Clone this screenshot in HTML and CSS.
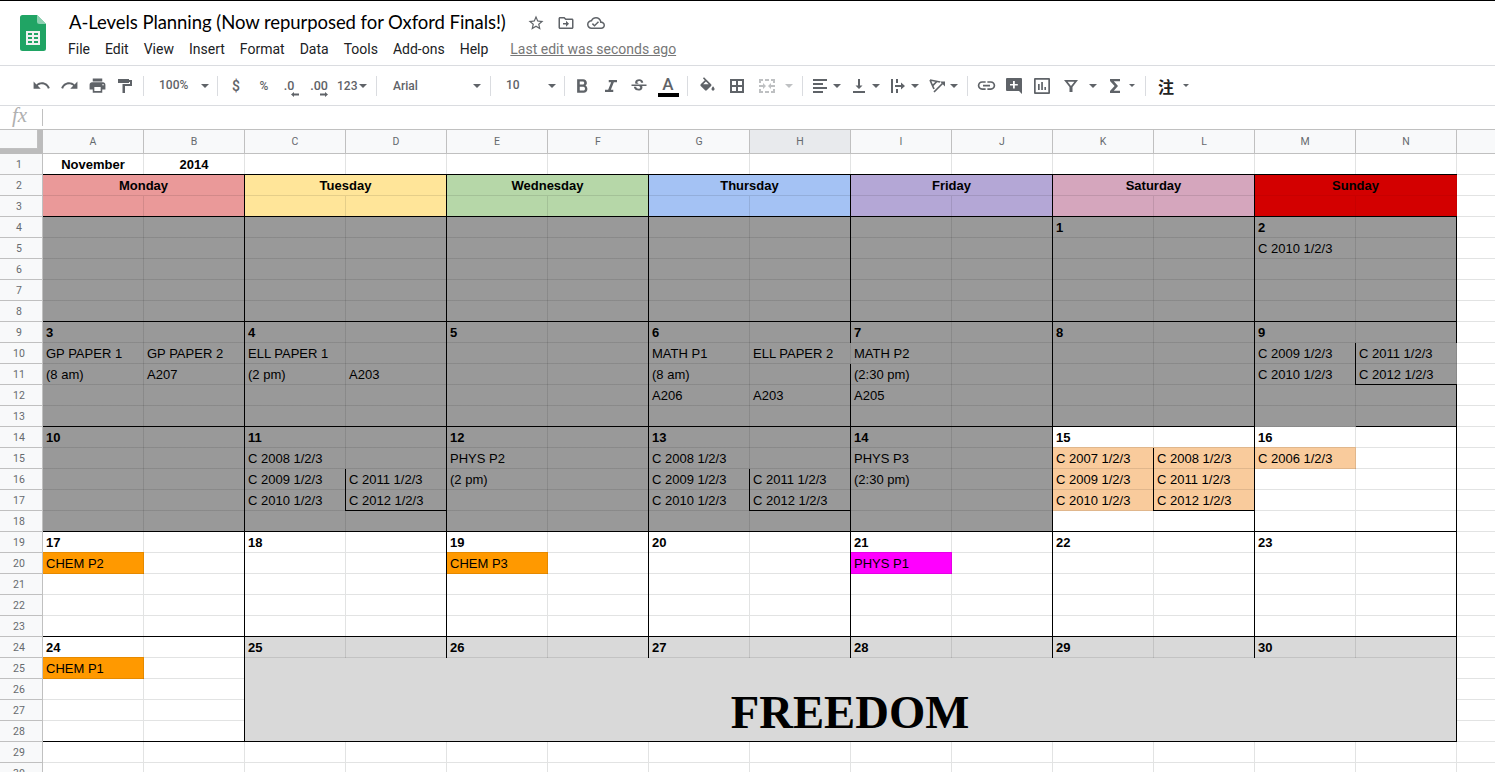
FILE: index.html
```html
<!DOCTYPE html>
<html lang="en">
<head>
<meta charset="utf-8">
<title>A-Levels Planning</title>
<link rel="stylesheet" href="styles.css">
</head>
<body>
<header class="top">
  <svg class="logo" viewBox="0 0 26 36">
    <path d="M2.500 0H17l9 9v24.500a2.500 2.500 0 0 1-2.500 2.500h-21A2.500 2.500 0 0 1 0 33.500v-31A2.500 2.500 0 0 1 2.500 0z" fill="#20a464"/>
    <path d="M17 0l9 9h-6.500A2.500 2.500 0 0 1 17 6.500z" fill="#8ed1b1"/>
    <path d="M6 16h14v14H6zM8 18v2h4v-2zM14 18v2h4v-2zM8 22v2h4v-2zM14 22v2h4v-2zM8 26v2h4v-2zM14 26v2h4v-2z" fill="#f1f1f1" fill-rule="evenodd"/>
  </svg>
  <div class="heading">
    <div class="title-row">
      <h1 class="title">A-Levels Planning (Now repurposed for Oxford Finals!)</h1>
      <svg class="icon i18" viewBox="0 0 24 24"><path d="M22 9.240l-7.190-.62L12 2 9.190 8.630 2 9.240l5.460 4.730L5.820 21 12 17.270 18.180 21l-1.630-7.030L22 9.240zM12 15.400l-3.760 2.270 1-4.280-3.320-2.880 4.380-.38L12 6.100l1.710 4.040 4.380.38-3.320 2.880 1 4.280L12 15.400z"/></svg>
      <svg class="icon i18" viewBox="0 0 24 24"><path d="M20 6h-8l-2-2H4c-1.100 0-2 .9-2 2v12c0 1.100.9 2 2 2h16c1.100 0 2-.9 2-2V8c0-1.100-.9-2-2-2zm0 12H4V6h5.200l2 2H20v10zm-8-1l4-4-4-4v3H8v2h4z"/></svg>
      <svg class="icon i18" viewBox="0 0 24 24"><path d="M19.350 10.040C18.670 6.590 15.640 4 12 4 9.110 4 6.600 5.640 5.350 8.040 2.340 8.360 0 10.910 0 14c0 3.310 2.690 6 6 6h13c2.760 0 5-2.240 5-5 0-2.640-2.050-4.780-4.650-4.960zM19 18H6c-2.210 0-4-1.790-4-4s1.790-4 4-4h.71C7.370 7.690 9.480 6 12 6c3.040 0 5.500 2.460 5.500 5.500v.5H19c1.660 0 3 1.340 3 3s-1.340 3-3 3zm-9-3.820l-2.090-2.090L6.500 13.500 10 17l6.010-6.010-1.410-1.410z"/></svg>
    </div>
    <nav class="menu">
      <span>File</span><span>Edit</span><span>View</span><span>Insert</span><span>Format</span><span>Data</span><span>Tools</span><span>Add-ons</span><span>Help</span>
      <span class="last-edit">Last edit was seconds ago</span>
    </nav>
  </div>
</header>

<div class="toolbar">
  <span class="btn"><svg class="icon i19" viewBox="0 0 24 24"><path d="M12.500 8c-2.650 0-5.050.99-6.900 2.600L2 7v9h9l-3.620-3.620c1.390-1.160 3.160-1.880 5.120-1.880 3.540 0 6.550 2.310 7.600 5.500l2.370-.78C21.080 11.030 17.150 8 12.500 8z"/></svg></span>
  <span class="btn"><svg class="icon i19" viewBox="0 0 24 24"><path d="M18.400 10.600C16.550 8.990 14.150 8 11.500 8c-4.650 0-8.580 3.030-9.960 7.220L3.900 16c1.050-3.190 4.050-5.500 7.600-5.500 1.950 0 3.730.72 5.120 1.880L13 16h9V7l-3.600 3.600z"/></svg></span>
  <span class="btn"><svg class="icon i19" viewBox="0 0 24 24"><path d="M19 8H5c-1.660 0-3 1.340-3 3v6h4v4h12v-4h4v-6c0-1.660-1.340-3-3-3zm-3 11H8v-5h8v5zm3-7c-.55 0-1-.45-1-1s.45-1 1-1 1 .45 1 1-.45 1-1 1zm-1-9H6v4h12V3z"/></svg></span>
  <span class="btn"><svg class="icon i14" viewBox="0 0 14 14"><path d="M0 0h11v1h3v6H7v7H4.500V5H12V3h-1v1H0z"/></svg></span>
  <i class="sep"></i>
  <span class="field zoom">100%</span><i class="caret"></i>
  <i class="sep"></i>
  <span class="btn glyph g1">$</span>
  <span class="btn glyph percent">%</span>
  <span class="btn glyph decimal less"><span>.0</span><svg class="arrow" viewBox="0 0 8 5"><path d="M3 0v1.500h5v2H3V5L0 2.500z"/></svg></span>
  <span class="btn glyph decimal"><span>.00</span><svg class="arrow" viewBox="0 0 8 5"><path d="M5 0v1.500H0v2h5V5l3-2.500z"/></svg></span>
  <span class="field number">123</span><i class="caret tight"></i>
  <i class="sep g3"></i>
  <span class="field font">Arial</span><i class="caret"></i>
  <i class="sep g1"></i>
  <span class="field size">10</span><i class="caret"></i>
  <i class="sep"></i>
  <span class="btn"><svg class="icon i18" viewBox="0 0 24 24"><path d="M16.600 11.300c1.100-.8 1.900-2 1.900-3.400C18.500 5 16.300 3 13.500 3H5.500v18h8.800c2.800 0 4.900-2.200 4.900-5 0-2.100-1-3.900-2.600-4.700zM9 6h4c1.200 0 2 .9 2 2s-.8 2-2 2H9zm4.800 12H9v-5h4.800c1.300 0 2.200 1.200 2.200 2.500S15.100 18 13.800 18z"/></svg></span>
  <span class="btn g1"><svg class="icon i18" viewBox="0 0 24 24"><path d="M9 4v3h3.200l-4 10H4v3h11v-3h-3.200l4-10H20V4z"/></svg></span>
  <span class="btn"><svg class="icon i18" viewBox="0 0 24 24"><path d="M6.850 7.080C6.850 4.370 9.450 3 12.240 3c1.640 0 3 .49 3.900 1.280.77.65 1.460 1.730 1.460 3.240h-3.010c0-.31-.05-.59-.15-.85-.29-.86-1.200-1.280-2.250-1.280-1.860 0-2.340 1.020-2.340 1.700 0 .48.25.88.74 1.210.38.250.77.480 1.410.7H7.390c-.21-.34-.54-.89-.54-1.920zM22 12v-2H2v2h9.620c1.150.45 1.960.75 1.960 1.970 0 1-.81 1.670-2.280 1.670-1.540 0-2.930-.54-2.930-2.510H5.300c0 .55.08 1.130.24 1.580.81 2.290 3.290 3.300 5.760 3.300 2.270 0 5.300-.89 5.300-4.050 0-.3-.01-1.160-.48-1.940H22z"/></svg></span>
  <span class="btn text-color g1"><span>A</span></span>
  <i class="sep g1"></i>
  <span class="btn g2"><svg class="icon i19" viewBox="0 0 24 24"><path d="M16.560 8.940L7.620 0 6.210 1.410l2.380 2.380-5.150 5.150c-.59.59-.59 1.540 0 2.120l5.500 5.500c.29.290.68.440 1.060.440s.77-.15 1.060-.44l5.500-5.500c.59-.58.59-1.530 0-2.120zM19 11.500s-2 2.170-2 3.500c0 1.100.9 2 2 2s2-.9 2-2c0-1.330-2-3.500-2-3.500zM6.500 9L10 5.500 13.500 9z" fill-rule="evenodd" transform="translate(0 1.500)"/></svg></span>
  <span class="btn g2"><svg class="icon i14" viewBox="0 0 14 14"><path d="M0 0h14v14H0zM2 2v4h4V2zM8 2v4h4V2zM2 8v4h4V8zM8 8v4h4V8z" fill-rule="evenodd"/></svg></span>
  <span class="btn g2 off"><svg class="icon merge" viewBox="0 0 16 14"><path d="M0 0h4v2H2v2H0zM6 0h4v2H6zM12 0h4v4h-2V2h-2zM0 10h2v2h2v2H0zM6 12h4v2H6zM14 10h2v4h-4v-2h2zM0 6h4V4l3 3-3 3V8H0zM16 6h-4V4L9 7l3 3V8h4z"/></svg></span><i class="caret off"></i>
  <i class="sep g1"></i>
  <span class="btn slim g5"><svg class="icon i14" viewBox="0 0 14 14"><path d="M0 0h14v2H0zM0 4h10v2H0zM0 8h14v2H0zM0 12h10v2H0z"/></svg></span><i class="caret"></i>
  <span class="btn slim g5"><svg class="icon i14" viewBox="0 0 14 14"><path d="M6 0h2v6.500h2.500L7 10 3.500 6.500H6zM1 12h12v2H1z"/></svg></span><i class="caret"></i>
  <span class="btn slim g5"><svg class="icon i14" viewBox="0 0 14 14"><path d="M0 0h2v14H0zM5 0h2v4H5zM5 10h2v4H5zM4 6h6V3.500L14 7l-4 3.500V8H4z"/></svg></span><i class="caret"></i>
  <span class="btn slim g5"><svg class="icon rotate" viewBox="0 0 16 14"><path d="M1 1l10 2M1 1l4 9M7.800 2.500L3.700 6.600M5 13l8.500-8.500" fill="none" stroke="#5f6368" stroke-width="1.700"/><path d="M11 2.500h5V7.500z"/></svg></span><i class="caret"></i>
  <i class="sep g1"></i>
  <span class="btn g1"><svg class="icon i21" viewBox="0 0 24 24"><path d="M3.900 12c0-1.710 1.390-3.100 3.100-3.100h4V7H7c-2.760 0-5 2.240-5 5s2.240 5 5 5h4v-1.900H7c-1.710 0-3.100-1.390-3.100-3.100zM8 13h8v-2H8v2zm9-6h-4v1.900h4c1.710 0 3.100 1.390 3.100 3.100s-1.390 3.100-3.100 3.100h-4V17h4c2.760 0 5-2.240 5-5s-2.240-5-5-5z"/></svg></span>
  <span class="btn"><svg class="icon i16" viewBox="0 0 16 16"><path d="M1 0h14a1 1 0 0 1 1 1v15l-3-3H1a1 1 0 0 1-1-1V1a1 1 0 0 1 1-1zM7 3v3H4v1.500h3v3h1.800v-3h3V6h-3V3z" fill-rule="evenodd"/></svg></span>
  <span class="btn"><svg class="icon i16" viewBox="0 0 16 16"><path d="M1 0h14a1 1 0 0 1 1 1v14a1 1 0 0 1-1 1H1a1 1 0 0 1-1-1V1a1 1 0 0 1 1-1zM1.700 1.700v12.600h12.600V1.700zM4 6h1.700v6H4zM7.200 4h1.700v8H7.200zM10.400 9H12v3h-1.600z" fill-rule="evenodd"/></svg></span>
  <span class="btn g1"><svg class="icon i14" viewBox="0 0 14 14"><path d="M0 1h14L8.500 8v5h-3V8zM3.600 2.700L7 7l3.400-4.300z" fill-rule="evenodd"/></svg></span><i class="caret"></i>
  <span class="btn slim g5"><svg class="icon i14" viewBox="0 0 14 14"><path d="M2 0h10v2.300H5.800L10 7l-4.200 4.700H12V14H2v-2l4.600-5L2 2z"/></svg></span><i class="caret small"></i>
  <i class="sep g1"></i>
  <span class="btn slim ime">注</span><i class="caret small g3"></i>
</div>

<div class="formula"><span class="fx">fx</span></div>
<main class="sheet" id="sheet"></main>
<script src="sheet.js"></script>
</body>
</html>
```

FILE: styles.css
```css
* { box-sizing: border-box; }
body {
  margin: 0;
  height: 772px;
  overflow: hidden;
  background: #fff;
  border-top: 1px solid #000;
  font-family: Roboto, sans-serif;
}
.icon { fill: #5f6368; display: block; flex: none; overflow: visible; }
.i14 { width: 14px; height: 14px; }
.i16 { width: 16px; height: 16px; }
.i18 { width: 18px; height: 18px; }
.i19 { width: 19px; height: 19px; }
.i21 { width: 21px; height: 21px; }
.rotate, .merge { width: 16px; height: 14px; }

.top {
  display: flex;
  height: 65px;
  padding-left: 20px;
  border-bottom: 1px solid #dadce0;
}
.logo { width: 26px; height: 36px; margin-top: 14px; flex: none; }
.heading { margin-left: 22px; }
.title-row { display: flex; align-items: center; height: 28px; margin-top: 8px; gap: 12px; }
.title {
  width: 446px;
  margin: 0 0 2px 1px;
  font: 400 18.500px/26px Lato, sans-serif;
  letter-spacing: -.06px;
  color: #000;
  white-space: nowrap;
}
.menu {
  display: flex;
  gap: 15px;
  font-size: 14px;
  line-height: 24px;
  color: #202124;
  white-space: nowrap;
}
.last-edit { margin-left: 7px; color: #777; text-decoration: underline; }

.toolbar {
  display: flex;
  align-items: center;
  height: 40px;
  padding-left: 27px;
  border-bottom: 1px solid #dadce0;
  font-size: 12px;
  color: #5f6368;
}
.btn { width: 28px; height: 28px; display: flex; align-items: center; justify-content: center; flex: none; }
.slim { width: 18px; }
.glyph { font-size: 14px; font-weight: 500; }
.percent { font-size: 12px; }
.decimal { font-size: 12.500px; flex-direction: column; padding-top: 5px; }
.decimal span { line-height: 13px; padding-right: 2px; }
.less span { padding-right: 6px; }
.arrow { width: 8px; height: 5px; fill: #5f6368; align-self: flex-end; margin-right: 6px; }
.less .arrow { margin-right: 7px; }
.sep { width: 8px; height: 20px; flex: none; background: linear-gradient(#dadce0, #dadce0) 4px 0 / 1px 100% no-repeat; }
.field { flex: none; font-size: 12px; font-weight: 500; }
.zoom { width: 50px; padding: 0 0 1px 12px; }
.number { width: 23px; padding-left: 3px; }
.font { width: 89px; padding-left: 13px; }
.size { width: 50px; padding: 0 0 1px 12px; }
.caret { width: 16px; height: 4px; flex: none; display: flex; justify-content: center; margin-top: 1px; }
.caret::before { content: ""; border: 4px solid transparent; border-top-color: #5f6368; border-bottom: 0; }
.caret.tight { width: 12px; }
.caret.small::before { border-width: 3px 3px 0; }
.off { opacity: .4; }
.g1 { margin-left: 1px; }
.g2 { margin-left: 2px; }
.g3 { margin-left: 3px; }
.g5 { margin-left: 5px; }
.text-color { flex-direction: column; font-size: 17px; font-weight: 500; }
.text-color span { line-height: 18px; }
.text-color::after { content: ""; width: 21px; height: 4px; background: #000; }
.ime { margin-left: 8px; color: #222; font: 700 16px "Noto Sans CJK SC", sans-serif; }

.formula { display: flex; height: 24px; border-bottom: 1px solid #c0c0c0; }
.fx {
  width: 43px;
  height: 17px;
  margin-top: 3px;
  padding-left: 12px;
  border-right: 1px solid #c0c0c0;
  font: italic 21px/12px "Liberation Serif", serif;
  color: #b0b0b0;
}

.sheet {
  display: grid;
  grid-template-columns: 43px repeat(14, 101px) 38px;
  grid-template-rows: 24px repeat(30, 21px);
  font: 13px/20px "Liberation Sans", Arial, sans-serif;
  color: #000;
}
.cell, .head {
  --line: #e2e3e3;
  --r: var(--line);
  --b: var(--line);
  --fill: #fff;
  --right-edge: linear-gradient(var(--r), var(--r)) right / 1px 100% no-repeat;
  --bottom-edge: linear-gradient(var(--b), var(--b)) bottom / 100% 1px no-repeat;
  min-width: 0;
  overflow: hidden;
  white-space: nowrap;
  background: var(--bottom-edge), var(--right-edge), var(--fill);
}
.cell { padding: 1px 0 0 3px; }
.head {
  --line: #c0c0c0;
  --fill: #f8f9fa;
  font-family: Roboto, sans-serif;
  font-size: 10.500px;
  text-align: center;
  color: #666a6e;
}
.col { line-height: 23px; padding-right: 1px; }
.row { padding-right: 5px; line-height: 21px; }
.hot { --fill: #e8eaed; }
.corner { border: solid #bcbcbc; border-width: 0 5px 5px 0; }
.last { --r: transparent; }
.strong { font-weight: 700; }
.center { text-align: center; padding-left: 0; padding-right: 1px; }
.wide { grid-column: span 2; }

.red, .rose, .yellow, .green, .blue, .violet, .pink, .gray, .silver, .peach, .orange, .magenta { --line: rgba(0, 0, 0, .1); }
.rose { --fill: #ea9999; }
.yellow { --fill: #ffe599; }
.green { --fill: #b6d7a8; }
.blue { --fill: #a4c2f4; }
.violet { --fill: #b4a7d6; }
.pink { --fill: #d5a6bd; }
.red { --fill: #d30000; --line: rgba(0, 0, 0, .05); }
.gray { --fill: #999; }
.silver { --fill: #d9d9d9; }
.peach { --fill: #f9cb9c; }
.orange { --fill: #ff9900; }
.magenta { --fill: #ff00ff; }

.b-peach { --b: #e0b78c; }
.b-orange { --b: #e68a00; }
.b-magenta { --b: #e600e6; }
.b-black { --b: #000; }
.r-black { --r: #000; background: var(--right-edge), var(--bottom-edge), var(--fill); }

.freedom {
  grid-column: span 12;
  grid-row: span 4;
  display: flex;
  align-items: flex-end;
  justify-content: center;
  padding: 0 2px 3px 0;
  font: 700 46.700px/54px "Liberation Serif", serif;
}
```

FILE: sheet.js
```js
const COLS = 'ABCDEFGHIJKLMN';
const DAYS = [
  ['Monday', 'rose'], ['Tuesday', 'yellow'], ['Wednesday', 'green'], ['Thursday', 'blue'],
  ['Friday', 'violet'], ['Saturday', 'pink'], ['Sunday', 'red'],
];

const TEXT = {
  A1: 'November', B1: '2014',
  K4: '1', M4: '2', M5: 'C 2010 1/2/3',
  A10: 'GP PAPER 1', A11: '(8 am)', B10: 'GP PAPER 2', B11: 'A207',
  C10: 'ELL PAPER 1', C11: '(2 pm)', D11: 'A203',
  G10: 'MATH P1', G11: '(8 am)', G12: 'A206', H10: 'ELL PAPER 2', H12: 'A203',
  I10: 'MATH P2', I11: '(2:30 pm)', I12: 'A205',
  M10: 'C 2009 1/2/3', M11: 'C 2010 1/2/3', N10: 'C 2011 1/2/3', N11: 'C 2012 1/2/3',
  C15: 'C 2008 1/2/3', C16: 'C 2009 1/2/3', C17: 'C 2010 1/2/3', D16: 'C 2011 1/2/3', D17: 'C 2012 1/2/3',
  E15: 'PHYS P2', E16: '(2 pm)',
  G15: 'C 2008 1/2/3', G16: 'C 2009 1/2/3', G17: 'C 2010 1/2/3', H16: 'C 2011 1/2/3', H17: 'C 2012 1/2/3',
  I15: 'PHYS P3', I16: '(2:30 pm)',
  K15: 'C 2007 1/2/3', K16: 'C 2009 1/2/3', K17: 'C 2010 1/2/3',
  L15: 'C 2008 1/2/3', L16: 'C 2011 1/2/3', L17: 'C 2012 1/2/3', M15: 'C 2006 1/2/3',
  A20: 'CHEM P2', E20: 'CHEM P3', I20: 'PHYS P1', A25: 'CHEM P1',
};

// Day numbers sit in the first row of each week block.
[[9, 3], [14, 10], [19, 17], [24, 24]].forEach(([row, first]) => {
  for (let d = 0; d < 7; d++) TEXT[COLS[d * 2] + row] = String(first + d);
});

const ACCENT = {
  A20: 'orange', E20: 'orange', A25: 'orange', I20: 'magenta', M15: 'peach',
  K15: 'peach', K16: 'peach', K17: 'peach', L15: 'peach', L16: 'peach', L17: 'peach',
};

function fillOf(c, r) {
  const ref = COLS[c] + r;
  if (ACCENT[ref]) return ACCENT[ref];
  if (r === 2 || r === 3) return DAYS[c >> 1][1];
  if (r >= 4 && r <= 13) return 'gray';
  if (r >= 14 && r <= 18 && c < 10) return 'gray';
  if (r >= 24 && r <= 28 && c >= 2) return 'silver';
  return '';
}

const INNER_RIGHT = new Set(['C16', 'C17', 'G16', 'G17', 'K15', 'K16', 'K17', 'M10', 'M11']);
const OPEN_RIGHT = new Set(['H10', 'N10', 'N11', 'N2', 'N3']);
const INNER_BOTTOM = new Set(['D17', 'H17', 'L17', 'N11']);

function edges(c, r) {
  const ref = COLS[c] + r;
  const out = [];
  const weekEdge = c % 2 === 1 && r >= 2 && r <= 28 && !OPEN_RIGHT.has(ref);
  if (weekEdge || INNER_RIGHT.has(ref)) out.push('r-black');
  const blockEdge = [1, 3, 8, 13, 18, 23, 28].includes(r) && ref !== 'M13';
  if (blockEdge || INNER_BOTTOM.has(ref)) out.push('b-black');
  else if (ACCENT[COLS[c] + (r + 1)] && !fillOf(c, r)) out.push('b-' + ACCENT[COLS[c] + (r + 1)]);
  return out;
}

const sheet = document.getElementById('sheet');
function add(classes, text) {
  const el = document.createElement('div');
  el.className = classes.filter(Boolean).join(' ');
  el.textContent = text || '';
  sheet.appendChild(el);
}

add(['head', 'corner']);
[...COLS].forEach((l) => add(['head', 'col', l === 'H' && 'hot'], l));
add(['head', 'col', 'last']);

for (let r = 1; r <= 30; r++) {
  add(['head', 'row'], String(r));
  for (let c = 0; c < 14; c++) {
    if (r === 2) {
      if (c % 2 === 0) add(['cell', 'wide', 'center', 'strong', fillOf(c, r), ...edges(c + 1, r)], DAYS[c >> 1][0]);
      continue;
    }
    // C25:N28 is one merged block.
    if (r >= 25 && r <= 28 && c >= 2) {
      if (r === 25 && c === 2) add(['cell', 'silver', 'freedom', 'r-black', 'b-black'], 'FREEDOM');
      continue;
    }
    const text = TEXT[COLS[c] + r];
    const strong = r === 1 || /^\d+$/.test(text || '');
    add(['cell', fillOf(c, r), strong && 'strong', r === 1 && 'center', ...edges(c, r)], text);
  }
  add(['cell', 'last']);
}
```
